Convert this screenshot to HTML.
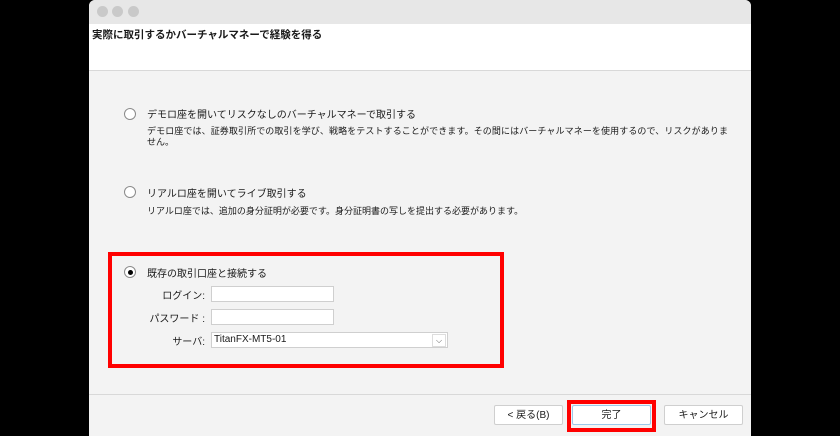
<!DOCTYPE html>
<html><head><meta charset="utf-8"><style>
body{margin:0;width:840px;height:436px;background:#000;position:relative;overflow:hidden;font-family:"Liberation Sans","Noto Sans CJK JP",sans-serif;color:#1a1a1a}
.a{position:absolute}
.win{left:89px;top:0;width:662px;height:436px;background:#f3f3f3;border-radius:6px 6px 0 0;overflow:hidden}
.t{font-size:10px;white-space:nowrap}
.dot{width:11px;height:11px;border-radius:50%;background:#c9c9c9;top:6px}
.radio{width:10px;height:10px;border:1px solid #8a8a8a;border-radius:50%;background:#fff}
.inp{background:#fff;border:1px solid #cfcfcf;height:14px}
.btn{background:#fff;border:1px solid #cfcfcf;border-radius:2px;height:18px;font-size:10px;text-align:center;line-height:19px}
</style></head><body>
<div class="a win">
 <div class="a" style="left:0;top:0;width:662px;height:24px;background:#e7e7e7"></div>
 <div class="a dot" style="left:8px"></div><div class="a dot" style="left:23px"></div><div class="a dot" style="left:39px"></div>
 <div class="a" style="left:0;top:24px;width:662px;height:46px;background:#fff;border-bottom:1px solid #d8d8d8"></div>
 <div class="a t" style="left:3px;top:27px;font-weight:bold;font-size:10.5px">実際に取引するかバーチャルマネーで経験を得る</div>
 <div class="a radio" style="left:35px;top:108px"></div>
 <div class="a t" style="left:58px;top:106px">デモロ座を開いてリスクなしのバーチャルマネーで取引する</div>
 <div class="a t" style="left:58px;top:124px;font-size:9px;letter-spacing:0.1px">デモロ座では、証券取引所での取引を学び、戦略をテストすることができます。その間にはバーチャルマネーを使用するので、リスクがありま</div>
 <div class="a t" style="left:58px;top:135px;font-size:9px">せん。</div>
 <div class="a radio" style="left:35px;top:186px"></div>
 <div class="a t" style="left:58px;top:185px">リアルロ座を開いてライブ取引する</div>
 <div class="a t" style="left:58px;top:204px;font-size:9px">リアルロ座では、追加の身分証明が必要です。身分証明書の写しを提出する必要があります。</div>
 <div class="a" style="left:19px;top:252px;width:388px;height:108px;border:4px solid #f00"></div>
 <div class="a radio" style="left:35px;top:266px"></div>
 <div class="a" style="left:39px;top:270px;width:5px;height:5px;border-radius:50%;background:#000"></div>
 <div class="a t" style="left:58px;top:265px">既存の取引口座と接続する</div>
 <div class="a t" style="left:60px;top:287px;width:56px;text-align:right">ログイン:</div>
 <div class="a inp" style="left:122px;top:286px;width:121px"></div>
 <div class="a t" style="left:56px;top:310px;width:60px;text-align:right">パスワード :</div>
 <div class="a inp" style="left:122px;top:309px;width:121px"></div>
 <div class="a t" style="left:60px;top:333px;width:56px;text-align:right">サーバ:</div>
 <div class="a inp" style="left:122px;top:332px;width:235px"></div>
 <div class="a t" style="left:125px;top:334px">TitanFX-MT5-01</div>
 <div class="a" style="left:343px;top:334px;width:12px;height:11px;border:1px solid #ddd;font-size:8px;text-align:center;line-height:11px;color:#555">⌵</div>
 <div class="a" style="left:0;top:394px;width:662px;height:1px;background:#d8d8d8"></div>
 <div class="a btn" style="left:405px;top:405px;width:67px">&lt; 戻る(B)</div>
 <div class="a" style="left:478px;top:400px;width:81px;height:24px;border:4px solid #f00"></div>
 <div class="a btn" style="left:483px;top:405px;width:77px;border-color:#9cc9ea">完了</div>
 <div class="a btn" style="left:575px;top:405px;width:77px">キャンセル</div>
</div>
</body></html>
